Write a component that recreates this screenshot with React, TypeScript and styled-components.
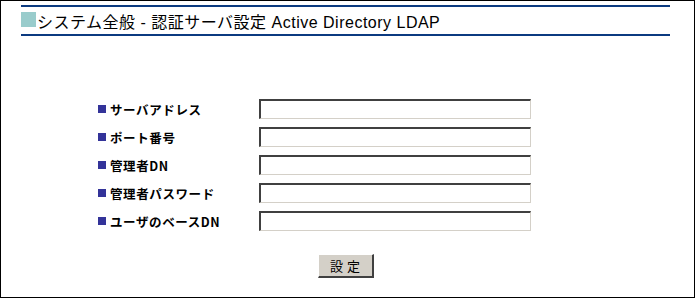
import { Fragment } from "react";
import styled, { createGlobalStyle } from "styled-components";

const GlobalStyle = createGlobalStyle`
  html, body {
    margin: 0;
    padding: 0;
    background: #ffffff;
  }
  body {
    font-family: "Liberation Sans", "Noto Sans CJK JP", sans-serif;
  }
`;

const Frame = styled.div`
  box-sizing: border-box;
  width: 695px;
  height: 298px;
  border: 1px solid #000000;
  background: #ffffff;
  padding-top: 4px;
`;

const Header = styled.div`
  margin-left: 20px;
  width: 649px;
  border-top: 2px solid #0b3a80;
  border-bottom: 2px solid #0b3a80;
`;

const TitleRow = styled.div`
  height: 27px;
  display: flex;
  align-items: center;
  gap: 1px;
  font-family: "Liberation Sans", "Noto Sans CJK JP", sans-serif;
  font-size: 16px;
  letter-spacing: 0.5px;
  color: #000000;
`;

const TitleMark = styled.span`
  width: 15px;
  height: 15px;
  background: #99cccc;
  flex: none;
  margin-top: -2px;
`;

const Form = styled.div`
  display: grid;
  grid-template-columns: 161px 272px;
  grid-auto-rows: 20px;
  row-gap: 8px;
  margin: 63px 0 0 97px;
`;

const Label = styled.div`
  display: flex;
  align-items: center;
  gap: 4px;
  font-family: "Noto Sans CJK JP", sans-serif;
  font-weight: 700;
  font-size: 12.5px;
  letter-spacing: 0.6px;
  color: #000000;
`;

const Bullet = styled.span`
  width: 8px;
  height: 8px;
  background: #333399;
  flex: none;
`;

const Field = styled.input`
  box-sizing: border-box;
  width: 272px;
  height: 20px;
  margin: 0;
  padding: 1px 3px;
  border-style: solid;
  border-width: 2px 1px 1px 2px;
  border-color: #404040 #d4d0c8 #d4d0c8 #404040;
  background: #ffffff;
  font-size: 12px;
  outline: none;
`;

const Actions = styled.div`
  display: flex;
  justify-content: center;
  margin-top: 23px;
  padding-right: 4px;
`;

const Button = styled.button`
  box-sizing: border-box;
  width: 56px;
  height: 24px;
  margin: 0;
  padding: 0;
  background: #d4d0c8;
  border-style: solid;
  border-width: 1px 2px 2px 1px;
  border-color: #ffffff #404040 #404040 #ffffff;
  font-family: "Noto Sans CJK JP", sans-serif;
  font-size: 13px;
  letter-spacing: 4px;
  text-indent: 4px;
  color: #000000;
`;

const fields = [
  "サーバアドレス",
  "ポート番号",
  "管理者DN",
  "管理者パスワード",
  "ユーザのベースDN",
];

export default function App() {
  return (
    <>
      <GlobalStyle />
      <Frame>
        <Header>
          <TitleRow>
            <TitleMark />
            システム全般 - 認証サーバ設定 Active Directory LDAP
          </TitleRow>
        </Header>
        <Form>
          {fields.map((name) => (
            <Fragment key={name}>
              <Label>
                <Bullet />
                {name}
              </Label>
              <Field type="text" />
            </Fragment>
          ))}
        </Form>
        <Actions>
          <Button type="button">設定</Button>
        </Actions>
      </Frame>
    </>
  );
}
